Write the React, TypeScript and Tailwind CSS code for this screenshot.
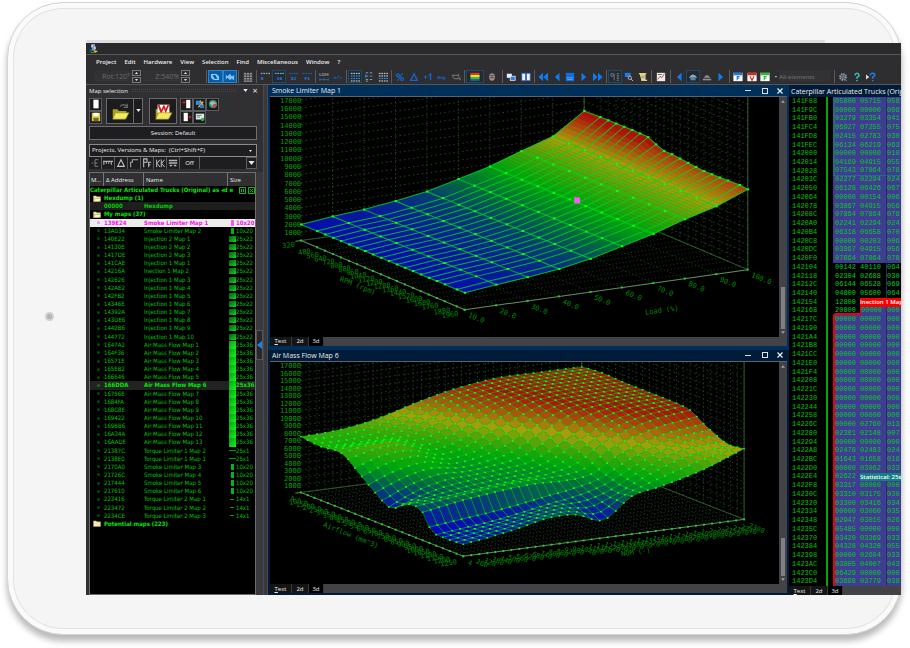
import React from "react";

type Pt = [number, number];

/* ---------- colour ramp for the 3d surfaces ---------- */
const STOPS: [number, number, number, number][] = [
  [14, 8, 8, 184],
  [22, 8, 26, 160],
  [31, 6, 66, 112],
  [38, 4, 106, 66],
  [48, 0, 166, 14],
  [58, 70, 164, 10],
  [68, 166, 160, 12],
  [77, 172, 92, 14],
  [87, 176, 14, 12],
];

function ramp(h: number): string {
  if (h <= STOPS[0][0]) return `rgb(${STOPS[0].slice(1).join(",")})`;
  for (let k = 1; k < STOPS.length; k++) {
    if (h <= STOPS[k][0]) {
      const a = STOPS[k - 1];
      const b = STOPS[k];
      const t = (h - a[0]) / (b[0] - a[0]);
      return `rgb(${[1, 2, 3].map((c) => Math.round(a[c] + (b[c] - a[c]) * t)).join(",")})`;
    }
  }
  return `rgb(${STOPS[STOPS.length - 1].slice(1).join(",")})`;
}

/* smooth interpolation through uneven knots */
function spline(xs: number[], ys: number[], x: number): number {
  const n = xs.length;
  let k = 0;
  while (k < n - 2 && x > xs[k + 1]) k++;
  const slope = (i: number) => (ys[i + 1] - ys[i]) / (xs[i + 1] - xs[i]);
  const tan = (i: number) => {
    if (i === 0) return slope(0);
    if (i === n - 1) return slope(n - 2);
    return (slope(i - 1) + slope(i)) / 2;
  };
  const d = xs[k + 1] - xs[k];
  const t = (x - xs[k]) / d;
  const t2 = t * t;
  const t3 = t2 * t;
  return (
    (2 * t3 - 3 * t2 + 1) * ys[k] +
    (t3 - 2 * t2 + t) * d * tan(k) +
    (3 * t2 - 2 * t3) * ys[k + 1] +
    (t3 - t2) * d * tan(k + 1)
  );
}

function linear(xs: number[], ys: number[], x: number): number {
  let k = 0;
  while (k < xs.length - 2 && x > xs[k + 1]) k++;
  return ys[k] + ((ys[k + 1] - ys[k]) * (x - xs[k])) / (xs[k + 1] - xs[k]);
}

const path = (pts: Pt[]) => pts.map((p) => `${p[0].toFixed(1)},${p[1].toFixed(1)}`).join(" ");

/* ---------- axes shared by both plots ---------- */
interface Box {
  origin: Pt;
  right: Pt;
  down: Pt;
  unit: number;
  us: number[];
  vs: number[];
}

function at(b: Box, u: number, v: number, h: number): Pt {
  return [b.origin[0] + b.right[0] * u + b.down[0] * v, b.origin[1] + b.right[1] * u + b.down[1] * v - h];
}

function Walls({ box }: { box: Box }) {
  const seg = (a: Pt, c: Pt) => `M${a[0].toFixed(1)} ${a[1].toFixed(1)}L${c[0].toFixed(1)} ${c[1].toFixed(1)}`;
  const top = 19 * box.unit + 60;
  let dots = "";
  for (let k = 1; k < 24; k++) {
    dots += seg(at(box, 0, 0, k * box.unit), at(box, 1, 0, k * box.unit));
    dots += seg(at(box, 1, 0, k * box.unit), at(box, 1, 1, k * box.unit));
  }
  let verticals = "";
  let floor = "";
  box.us.forEach((u) => {
    verticals += seg(at(box, u, 0, 0), at(box, u, 0, top));
    floor += seg(at(box, u, 0, 0), at(box, u, 1, 0));
  });
  box.vs.forEach((v) => {
    verticals += seg(at(box, 1, v, 0), at(box, 1, v, top));
    floor += seg(at(box, 0, v, 0), at(box, 1, v, 0));
  });
  return (
    <g fill="none">
      <path d={dots} stroke="#1d4a1d" strokeDasharray="1.5 3" />
      <path d={verticals} stroke="#1b421b" strokeDasharray="1.5 2.5" />
      <path d={floor} stroke="#1f3a1f" strokeDasharray="1 2.5" />
      <path
        d={
          seg(at(box, 1, 0, 60), at(box, 1, 0, top)) +
          seg(at(box, 1, 1, 0), at(box, 1, 1, top)) +
          seg(at(box, 0, 0, 0), at(box, 1, 0, 0)) +
          seg(at(box, 1, 0, 0), at(box, 1, 1, 0))
        }
        stroke="#2d5c2d"
      />
      <path d={seg(at(box, -0.02, 0, 0), at(box, 0, 0, 0)) + seg(at(box, 0, 0, 0), at(box, 0, 1, 0)) + seg(at(box, 0, 1, 0), at(box, 1, 1, 0))} stroke="#5f8f5f" />
      {box.vs.map((v) => {
        const p = at(box, 0, v, 0);
        return <rect key={`v${v}`} x={p[0] - 1} y={p[1] - 1} width="2" height="2" fill="#1fd01f" />;
      })}
      {box.us.map((u) => {
        const p = at(box, u, 1, 0);
        return <rect key={`u${u}`} x={p[0] - 1} y={p[1] - 1} width="2" height="2" fill="#1fd01f" />;
      })}
    </g>
  );
}

function Label({ p, turn, anchor, children }: { p: Pt; turn: number; anchor: "start" | "end" | "middle"; children: React.ReactNode }) {
  return (
    <text
      transform={`translate(${p[0].toFixed(1)} ${p[1].toFixed(1)}) rotate(${turn})`}
      textAnchor={anchor}
      className="fill-[#008c00] font-['DejaVu_Sans_Mono',monospace] text-[7px]"
    >
      {children}
    </text>
  );
}

function HeightScale({ box }: { box: Box }) {
  return (
    <g>
      {Array.from({ length: 17 }, (_, k) => (
        <text
          key={k}
          x={box.origin[0]}
          y={box.origin[1] - (k + 1) * box.unit + 3}
          textAnchor="end"
          className="fill-[#00a400] font-['DejaVu_Sans_Mono',monospace] text-[7px]"
        >
          {(k + 1) * 1000}
        </text>
      ))}
    </g>
  );
}

/* ---------- Smoke Limiter Map 1 ---------- */
const RPM = [320, 480, 560, 640, 720, 800, 880, 960, 1040, 1120, 1200, 1280, 1360, 1440, 1520, 1600, 1680, 1760, 1880, 1960];
const LOAD = [10, 20, 30, 40, 50, 60, 70, 80, 90, 100];
const SMOKE: Box = {
  origin: [31, 143],
  right: [282, -40],
  down: [163, 69],
  unit: 8.25,
  us: LOAD.map((_, i) => i / 9),
  vs: RPM.map((r) => (r - 320) / 1640),
};
const BACK = [16, 19.6, 22, 26, 31, 39, 47, 58, 68, 89];
const FRONT = [17, 20.6, 23.6, 27.3, 33, 41, 49, 59, 67.5, 80];
const EDGE_V = [0, 0.1, 0.19, 0.3, 0.39, 0.44, 0.48, 0.54, 0.64, 0.73, 0.84, 0.95, 1];
const EDGE_H = [89, 89.8, 90, 90.4, 90, 86, 83, 83, 81, 79.7, 80, 81, 80];

function smokeHeight(i: number, v: number): number {
  const row = (k: number) => (k === 9 ? linear(EDGE_V, EDGE_H, v) : BACK[k] + (FRONT[k] - BACK[k]) * v);
  const k = Math.min(8, Math.floor(i));
  return row(k) + (row(k + 1) - row(k)) * (i - k);
}

function SmokePlot() {
  const b = SMOKE;
  const sp = (i: number, v: number) => at(b, i / 9, v, smokeHeight(i, v));
  const cells: React.ReactNode[] = [];
  const STEP = 8;
  for (let j = 0; j < 19; j++) {
    for (let s = 9 * STEP - 1; s >= 0; s--) {
      const i0 = s / STEP;
      const i1 = (s + 1) / STEP;
      const c = ramp(smokeHeight((i0 + i1) / 2, (b.vs[j] + b.vs[j + 1]) / 2));
      cells.push(
        <polygon key={`${j}-${s}`} points={path([sp(i0, b.vs[j]), sp(i1, b.vs[j]), sp(i1, b.vs[j + 1]), sp(i0, b.vs[j + 1])])} fill={c} stroke={c} strokeWidth="0.6" />
      );
    }
  }
  return (
    <svg role="img" aria-label="Smoke Limiter Map 1 surface" viewBox="0 0 507 239" preserveAspectRatio="xMinYMin meet" className="block h-full w-full bg-black">
      <Walls box={b} />
      <HeightScale box={b} />
      {cells}
      <g fill="none" stroke="#00d81a" strokeOpacity="0.8">
        {b.vs.map((v, j) => (
          <polyline key={`v${j}`} points={path(LOAD.map((_, i) => sp(i, v)))} />
        ))}
        {LOAD.map((_, i) => (
          <polyline key={`u${i}`} points={path(b.vs.map((v) => sp(i, v)))} />
        ))}
      </g>
      <g fill="#10ff10">
        {LOAD.map((_, i) =>
          b.vs.map((v, j) => {
            const p = sp(i, v);
            return i === 0 || i === 9 || j === 0 || j === 19 || j % 2 === 1 ? (
              <rect key={`${i}-${j}`} x={p[0] - 1} y={p[1] - 1} width="2.4" height="2" />
            ) : null;
          })
        )}
      </g>
      <rect x="303" y="100" width="6" height="6" fill="#f45cf0" />
      {RPM.map((r, j) => {
        const p = at(b, 0, b.vs[j], 0);
        return (
          <Label key={r} p={[p[0] - 6, p[1] + 6]} turn={-8} anchor="end">
            {r}
          </Label>
        );
      })}
      {LOAD.map((l, i) => {
        const p = at(b, i / 9, 1, 0);
        return (
          <Label key={l} p={[p[0] + 3, p[1] + 7]} turn={22} anchor="start">
            {l.toFixed(1)}
          </Label>
        );
      })}
      <Label p={[69, 183]} turn={22} anchor="start">RPM (rpm)</Label>
      <Label p={[374, 217]} turn={-8} anchor="start">Load (%)</Label>
    </svg>
  );
}

/* ---------- Air Mass Flow Map 6 ---------- */
const GU = [0, 0.1, 0.2, 0.3, 0.4, 0.5, 0.6, 0.7, 0.85, 1];
const GV = [0, 0.12, 0.26, 0.36, 0.46, 0.55, 0.67, 0.75, 0.8, 0.9, 1];
const GH = [
  [56, 57, 60, 66, 74, 81, 86, 89, 89, 89],
  [54, 53, 55, 60, 69, 79, 85, 89, 90, 91],
  [55, 60, 60, 52, 59, 72, 82, 88, 90, 90],
  [42, 52, 54, 47, 51, 63, 76, 86, 89, 90],
  [29, 40, 46, 43, 46, 53, 69, 82, 89, 90],
  [20, 32, 39, 41, 43, 46, 58, 75, 87, 90],
  [31, 33, 36, 39, 41, 43, 50, 68, 82, 88],
  [28, 33, 37, 40, 42, 41, 44, 60, 74, 80],
  [14, 17, 20, 24, 29, 34, 41, 55, 71, 76],
  [11, 15, 19, 24, 28, 27, 36, 50, 65, 69],
  [12, 16, 21, 27, 27, 18, 38, 44, 55, 71],
];
const AIR: Box = {
  origin: [31, 131],
  right: [282, -37],
  down: [163, 64],
  unit: 7.5,
  us: Array.from({ length: 36 }, (_, i) => i / 35),
  vs: Array.from({ length: 25 }, (_, i) => i / 24),
};
const airHeight = (u: number, v: number) => spline(GV, GH.map((row) => spline(GU, row, u)), v);

function AirPlot() {
  const b = AIR;
  const grid = b.vs.map((v) => b.us.map((u) => ({ h: airHeight(u, v), p: at(b, u, v, airHeight(u, v)) })));
  const cells: React.ReactNode[] = [];
  for (let j = 0; j < 24; j++) {
    for (let i = 34; i >= 0; i--) {
      const q = [grid[j][i], grid[j][i + 1], grid[j + 1][i + 1], grid[j + 1][i]];
      const h = q.reduce((s, c) => s + c.h, 0) / 4;
      cells.push(
        <g key={`${j}-${i}`}>
          <polygon points={path(q.map((c) => c.p))} fill={ramp(h)} stroke="#00dc14" strokeWidth="0.6" strokeOpacity="0.7" />
          {q.map((c, k) => (
            <rect key={k} x={c.p[0] - 0.8} y={c.p[1] - 0.7} width="1.6" height="1.4" fill="#10f810" />
          ))}
        </g>
      );
    }
  }
  return (
    <svg role="img" aria-label="Air Mass Flow Map 6 surface" viewBox="0 0 507 223" preserveAspectRatio="xMinYMin meet" className="block h-full w-full bg-black">
      <Walls box={b} />
      <HeightScale box={b} />
      {cells}
      {b.vs.map((v, j) => {
        const p = at(b, 0, v, 0);
        return (
          <Label key={j} p={[p[0] - 6, p[1] + 8]} turn={-8} anchor="end">
            {j === 0 ? 4 : j * 50 + 50}
          </Label>
        );
      })}
      {b.us.map((u, i) => {
        const p = at(b, u, 1, 0);
        return (
          <Label key={i} p={[p[0] + 4, p[1] + 8]} turn={22} anchor="start">
            {i === 0 ? 4 : 200 + i * 60}
          </Label>
        );
      })}
      <Label p={[53, 165]} turn={22} anchor="start">Airflow (mm^3)</Label>
      <Label p={[353, 195]} turn={-8} anchor="start">NOM (-)</Label>
    </svg>
  );
}

/* ---------- icons ---------- */
function Glyph({ name }: { name: string }) {
  const mono = "font-['DejaVu_Sans',sans-serif] text-[5px] font-bold";
  const bars = (c: string, y: number) => [0, 3, 6, 9].map((x) => <rect key={x} x={x + 1} y={y} width="2" height="1.5" fill={c} />);
  const body: Record<string, React.ReactNode> = {
    view3d: <path d="M2 3h5l3 6H5zM2 3v4l3 2M7 3l3 2v4" fill="none" stroke="#8fd0ff" strokeWidth="1.3" />,
    views: <path d="M1 3l2 2 3-3 2 3 3-1v6L8 8 6 10 3 7 1 9z" fill="#7ec0f5" />,
    grid: <g fill="#8a8a8c">{[1, 4.5, 8].map((x) => [1, 4, 7, 10].map((y) => <rect key={`${x}${y}`} x={x} y={y} width="3" height="2.2" />))}</g>,
    b8: <g>{bars("#7da6cf", 1)}<text x="1" y="10" className={mono} fill="#1e7be0">8</text></g>,
    b16: <g>{bars("#7da6cf", 1)}<text x="3" y="10" className={mono} fill="#1e7be0">16</text></g>,
    b32: <g>{bars("#1c5ea8", 1)}<text x="3" y="10" className={mono} fill="#1e7be0">32</text></g>,
    f1: <g>{bars("#1c5ea8", 1)}<text x="3" y="10" className={mono} fill="#1e7be0">F1</text></g>,
    lohi: <g><text x="0" y="5" className={mono} fill="#8a8a8c">LOHI</text><path d="M1 9h10M1 7v4M6 7v4M11 7v4" stroke="#2468a8" /></g>,
    sign: <path d="M1 7h3M2.500 5.500v3M5 8l2-4M8 7h3" stroke="#0f5fc0" strokeWidth="1.200" />,
    rows1: <g>{bars("#b8b8ba", 1)}{bars("#2a86e0", 4)}{bars("#2a86e0", 7)}{bars("#b8b8ba", 10)}</g>,
    rows2: <g><path d="M2 1h3M7 1h3M2 9h3M7 9h3M2 11h3" stroke="#a8a8aa" /><path d="M2 5h3M7 5h3M2 3v4" stroke="#2a86e0" strokeWidth="1.500" /></g>,
    rows3: <g>{bars("#b8b8ba", 1)}{bars("#b8b8ba", 4)}{bars("#2a86e0", 7)}{bars("#b8b8ba", 10)}</g>,
    percent: <g fill="none" stroke="#1463c8" strokeWidth="1.500"><circle cx="3.500" cy="4" r="1.700" /><circle cx="8.500" cy="8.500" r="1.700" /><path d="M9 1.500L3 10.500" /></g>,
    delta: <path d="M6 2L10 10H2z" fill="none" stroke="#1463c8" strokeWidth="1.600" />,
    plus1: <g><path d="M1 6h4M3 4v4" stroke="#1463c8" strokeWidth="1.300" /><path d="M7 4l2-1.500V10" fill="none" stroke="#1463c8" strokeWidth="1.700" /></g>,
    org: <text x="0" y="8" className={mono} fill="#1463c8">Org</text>,
    swap: <path d="M1 4h8V2M3 8h8v2M1 6h3M8 6h3" fill="none" stroke="#6b6b6e" strokeWidth="1.400" />,
    rainbow: <g><rect x="0.500" y="1" width="11" height="2.500" fill="#e03020" /><rect x="0.500" y="3.500" width="11" height="2.500" fill="#f0e020" /><rect x="0.500" y="6" width="11" height="2.500" fill="#38c030" /><rect x="0.500" y="8.500" width="11" height="2" fill="#2060d0" /></g>,
    bug: <g><ellipse cx="6" cy="6" rx="3.500" ry="4.500" fill="#9a9092" /><path d="M3 4h6M3 7h6" stroke="#584447" /><circle cx="6" cy="6" r="1" fill="#a02828" /></g>,
    cascade: <g><rect x="1" y="2" width="6" height="5" fill="#e8f0ff" /><rect x="5" y="5" width="6" height="5" fill="#2f7fe0" stroke="#fff" strokeWidth=".8" /></g>,
    tile: <g fill="#f0f4ff" stroke="#2464c8"><rect x="1" y="1.500" width="4.500" height="9" /><rect x="6.500" y="1.500" width="4.500" height="9" /></g>,
    prev2: <path d="M6 1v10L0.500 6zM12 1v10L6.500 6z" fill="#0c7cf2" />,
    prev: <path d="M9 1v10L3.500 6z" fill="#0c7cf2" />,
    frame: <g><rect x="1" y="1" width="10" height="10" fill="#0f6fe0" /><path d="M2 7h8M3 9h6" stroke="#8cc4ff" strokeWidth=".7" /></g>,
    next: <path d="M3 1v10L8.500 6z" fill="#0c7cf2" />,
    next2: <path d="M0 1v10L5.500 6zM6 1v10L11.500 6z" fill="#0c7cf2" />,
    columns: <path d="M1 2h3v3H1zM5 2v8M8 2h3M8 4h3M8 6h3M8 8h3M8 10h3" fill="none" stroke="#76767a" strokeWidth="1.100" />,
    find: <g><rect x="1" y="1" width="7" height="5" fill="#1d7be8" /><circle cx="7" cy="7" r="2" fill="none" stroke="#c4c4c6" /><path d="M8.500 8.500L11 11" stroke="#c4c4c6" /></g>,
    scroll: <g><path d="M2 2h7v8H4z" fill="#e8e0a8" /><path d="M1 2h9M4 10h7" stroke="#e0d060" strokeWidth="1.500" /><path d="M4 5h4M4 7h4" stroke="#605820" strokeWidth=".7" /></g>,
    chart: <g><rect x="1" y="1" width="10" height="10" fill="#eee" /><path d="M2 9l3-4 2 2 3-5" fill="none" stroke="#d03030" /><path d="M2 3h5" stroke="#555" /></g>,
    home: <g><path d="M1 7Q6-1 11 7z" fill="#9aa8b4" /><rect x="3" y="6" width="6" height="4" fill="#4a88b8" /></g>,
    base: <g><path d="M2 7Q6 0 10 7z" fill="#8c8c90" /><rect x="1" y="8" width="10" height="2" fill="#8c8c90" /></g>,
    fBlue: <g><rect x="0.500" y="1" width="11" height="10" fill="#fff" /><rect x="0.500" y="1" width="11" height="3" fill="#1878e0" /><path d="M5 10V5.500h3M5 7.500h2.500" stroke="#1878e0" fill="none" strokeWidth="1.300" /></g>,
    vRed: <g><rect x="0.500" y="1" width="11" height="10" fill="#fff" /><rect x="0.500" y="1" width="11" height="3" fill="#d82828" /><path d="M3.500 5l2.500 5 2.500-5" stroke="#d82828" fill="none" strokeWidth="1.400" /></g>,
    fGreen: <g><rect x="0.500" y="1" width="11" height="10" fill="#fff" /><rect x="0.500" y="1" width="11" height="3" fill="#30b838" /><path d="M5 10V5.500h3M5 7.500h2.500" stroke="#30b838" fill="none" strokeWidth="1.300" /></g>,
    gear: <g fill="none" stroke="#a4acb4"><circle cx="6" cy="6" r="3.600" strokeWidth="2" strokeDasharray="1.800 1" /><circle cx="6" cy="6" r="1.500" /><path d="M7 8l4 3" stroke="#4a98d8" /></g>,
    help: <path d="M3.500 4Q4 1.500 6 1.500T8.500 4Q8.300 5.300 6 6.500V8M6 9.500V11" fill="none" stroke="#2cc4b4" strokeWidth="1.900" />,
    whats: <g><path d="M0 3l4 3-4 3z" fill="#d8d8da" /><path d="M5 4Q5.500 1.500 8 1.500T10.500 4Q10 5.300 8 6.500V8M8 9.500V11" fill="none" stroke="#1a80e8" strokeWidth="1.900" /></g>,
    page: <path d="M3 1h6v10H3z" fill="#fff" stroke="#c8c8c8" strokeWidth=".5" />,
    save: <g><rect x="1" y="1" width="10" height="10" fill="#d8d048" /><rect x="3" y="1" width="6" height="4" fill="#fff" /><rect x="3" y="7" width="6" height="4" fill="#6b6820" /></g>,
    pageIn: <g><path d="M5 1h5v10H5z" fill="#fff" /><path d="M0 4h3M2 2.500L4 4 2 5.500" stroke="#e02020" fill="#e02020" /></g>,
    pageOut: <g><path d="M2 1h5v10H2z" fill="#fff" /><path d="M8 6h3M9.500 4.500v3" stroke="#e02020" strokeWidth="1.300" /></g>,
    tools: <g><rect x="1" y="2" width="6" height="5" fill="#2c8ce8" /><path d="M4 10l6-7M6 2l4 6" stroke="#e8b830" strokeWidth="1.500" /><rect x="6" y="7" width="5" height="4" fill="#2878c8" /></g>,
    globe: <g><circle cx="6" cy="6" r="4.800" fill="#3a9a68" /><path d="M2 5Q6 0 10 6L7 10z" fill="#a4b8d0" /><circle cx="8" cy="8" r="2.200" fill="#c84848" /></g>,
    card: <g><rect x="1" y="2" width="10" height="7" fill="#e0ece4" /><path d="M2 4h6M2 6h4" stroke="#607080" /><circle cx="9" cy="9" r="2" fill="#30b040" /></g>,
    ladder: <path d="M2 6h2M6 2v8M6 2h4M6 6h3M6 10h4" fill="none" stroke="#8c8c8e" />,
    ruler: <path d="M0 4h12M1 4v4M4 4v3M7 4v3M10 4v4" fill="none" stroke="#b0b0b2" strokeWidth="1.300" />,
    triangle: <path d="M6 2L10 10H2z" fill="none" stroke="#c8c8ca" strokeWidth="1.300" />,
    corner: <path d="M2 11V5h2V2h7" fill="none" stroke="#a8a8aa" strokeWidth="1.300" />,
    flag: <path d="M2 11V1h4v4H2M8 11V5h3M8 8h2" fill="none" stroke="#c0c0c2" strokeWidth="1.300" />,
    keys: <path d="M2 2v9M6 2L2.500 6.500 6 11M7.500 2v9M11.500 2L8 6.500l3.500 4.500" fill="none" stroke="#c0c0c2" strokeWidth="1.200" />,
    stack: <path d="M1 3h10M1 6h10M2 9h3M7 9h3" fill="none" stroke="#b4b4b6" strokeWidth="1.600" />,
  };
  return (
    <svg viewBox="0 0 12 12" className="block size-[10px] shrink-0" aria-hidden="true">
      {body[name]}
    </svg>
  );
}

function Arrow({ up, className }: { up?: boolean; className: string }) {
  return (
    <svg viewBox="0 0 6 4" className={`block ${className}`} aria-hidden="true">
      <path d={up ? "M0 4h6L3 0z" : "M0 0h6L3 4z"} fill="currentColor" />
    </svg>
  );
}

function Folder({ open }: { open?: boolean }) {
  return (
    <svg viewBox="0 0 9 8" className="block h-[7px] w-2" aria-hidden="true">
      <path d="M0.500 1h3l1 1h4v5.500h-8z" fill="#f4ecaa" stroke="#b8a860" strokeWidth=".5" />
      {open && <path d="M2 4h7L7.500 7.500h-7z" fill="#fff8c8" stroke="#8c7c38" strokeWidth=".5" />}
    </svg>
  );
}

function BigFolder({ version }: { version?: boolean }) {
  return (
    <svg viewBox="0 0 24 22" className="block h-[20px] w-[22px]" aria-hidden="true">
      <path d="M4 9h5l2 2h8v8H4z" fill="#a8a020" />
      {version ? (
        <g>
          <path d="M6 4h13v9H6z" fill="#fff" />
          <path d="M7 4l3 8 3-6 2 5 3-7" fill="none" stroke="#d82020" strokeWidth="2" />
        </g>
      ) : (
        <path d="M12 6q4-4 8 0M20 3v4h-4" fill="none" stroke="#6a6a6c" strokeWidth="1.300" />
      )}
      <path d="M7 13h15l-4 7H4z" fill="#f0ea60" stroke="#8c8418" strokeWidth=".6" />
    </svg>
  );
}

/* ---------- main toolbar ---------- */
const GROUPS: { width: string; items: string[] }[] = [
  { width: "w-8", items: ["view3d!", "views!"] },
  { width: "w-[18px]", items: ["grid"] },
  { width: "w-[59px]", items: ["b8", "b16*", "b32", "f1"] },
  { width: "w-[31px]", items: ["lohi", "sign"] },
  { width: "w-[45px]", items: ["rows1*", "rows2", "rows3"] },
  { width: "w-[73px]", items: ["percent", "delta", "plus1", "org", "swap"] },
  { width: "w-[38px]", items: ["rainbow*", "bug"] },
  { width: "w-8", items: ["cascade", "tile"] },
  { width: "w-[72px]", items: ["prev2", "prev", "frame", "next", "next2"] },
  { width: "w-[45px]", items: ["columns*", "find", "scroll"] },
  { width: "w-[19px]", items: ["chart"] },
  { width: "w-[59px]", items: ["prev", "home*", "base", "next"] },
  { width: "w-[44px]", items: ["fBlue", "vRed", "fGreen"] },
];

function ToolButton({ item }: { item: string }) {
  const name = item.replace(/[!*]/, "");
  const look = item.endsWith("!") ? "border-[#2a86c8] bg-[#0a5ca8]" : item.endsWith("*") ? "border-[#1c4a68] bg-[#252a30]" : "border-transparent";
  return (
    <button type="button" aria-label={name} className={`flex h-[13px] min-w-0 flex-1 items-center justify-center border ${look}`}>
      <Glyph name={name} />
    </button>
  );
}

function Spin({ label, value }: { label: string; value: string }) {
  return (
    <div className="flex shrink-0 items-center">
      <input aria-label={label} readOnly value={value} className="h-[11px] w-[38px] bg-[#323234] pr-0.5 text-right text-[7px] text-[#6c6c6e] outline-none" />
      <div className="flex flex-col gap-px">
        <button type="button" aria-label={`${label} up`} className="flex h-[6px] w-[9px] items-center justify-center border border-[#77777a]">
          <Arrow up className="h-0.5 w-[3px]" />
        </button>
        <button type="button" aria-label={`${label} down`} className="flex h-[6px] w-[9px] items-center justify-center border border-[#77777a]">
          <Arrow className="h-0.5 w-[3px]" />
        </button>
      </div>
    </div>
  );
}

function MainToolbar() {
  return (
    <div className="flex h-4 shrink-0 items-center overflow-hidden border-b border-[#56565a] pl-2">
      <Spin label="Rotation" value="Rot:120°" />
      <div className="w-0.5 shrink-0" />
      <Spin label="Zoom" value="Z:540%" />
      <div className="w-[16px] shrink-0" />
      {GROUPS.map((g, k) => (
        <div key={k} className={`${g.width} flex shrink-0 items-center border-l border-[#5a5a5c] px-px`}>
          {g.items.map((i, n) => (
            <ToolButton key={n} item={i} />
          ))}
        </div>
      ))}
      <span className="w-[6px] text-center text-[6px] leading-none">•</span>
      <input aria-label="Element filter" readOnly value="All elements" className="h-[11px] w-[52px] shrink-0 bg-[#323234] text-[6px] font-semibold text-[#68686a] outline-none" />
      <div className="ml-[3px] flex w-[44px] shrink-0 border-l border-[#5a5a5c] pl-px">
        {["gear", "help", "whats"].map((i) => (
          <ToolButton key={i} item={i} />
        ))}
      </div>
    </div>
  );
}

/* ---------- map list ---------- */
type MapRow = [string, string, string];
const MAPS: MapRow[] = [
  ["139E24", "Smoke Limiter Map 1", "10x20"],
  ["13A034", "Smoke Limiter Map 2", "10x20"],
  ["140E22", "Injection 2 Map 1", "25x22"],
  ["14130E", "Injection 2 Map 2", "25x22"],
  ["1417DE", "Injection 2 Map 3", "25x22"],
  ["141CAE", "Injection 1 Map 1", "25x22"],
  ["14216A", "Inection 1 Map 2", "25x22"],
  ["142626", "Injection 1 Map 3", "25x22"],
  ["142AE2", "Injection 1 Map 4", "25x22"],
  ["142FB2", "Injection 1 Map 5", "25x22"],
  ["14346E", "Injection 1 Map 6", "25x22"],
  ["14392A", "Injection 1 Map 7", "25x22"],
  ["143DE6", "Injection 1 Map 8", "25x22"],
  ["1442B6", "Injection 1 Map 9", "25x22"],
  ["144772", "Injection 1 Map 10", "25x22"],
  ["1647A2", "Air Mass Flow Map 1", "25x36"],
  ["164F36", "Air Mass Flow Map 2", "25x36"],
  ["16571E", "Air Mass Flow Map 3", "25x36"],
  ["165EB2", "Air Mass Flow Map 4", "25x36"],
  ["166646", "Air Mass Flow Map 5", "25x36"],
  ["166DDA", "Air Mass Flow Map 6", "25x36"],
  ["16756E", "Air Mass Flow Map 7", "25x36"],
  ["1684FA", "Air Mass Flow Map 8", "25x36"],
  ["168C8E", "Air Mass Flow Map 9", "25x36"],
  ["169422", "Air Mass Flow Map 10", "25x36"],
  ["169BB6", "Air Mass Flow Map 11", "25x36"],
  ["16A34A", "Air Mass Flow Map 12", "25x36"],
  ["16AADE", "Air Mass Flow Map 13", "25x36"],
  ["21387C", "Torque Limiter 1 Map 2", "25x1"],
  ["2138E0", "Torque Limiter 1 Map 1", "25x1"],
  ["2170A0", "Smoke Limiter Map 3", "10x20"],
  ["21726C", "Smoke Limiter Map 4", "10x20"],
  ["217444", "Smoke Limiter Map 5", "10x20"],
  ["217610", "Smoke Limiter Map 6", "10x20"],
  ["223416", "Torque Limiter 2 Map 1", "14x1"],
  ["223472", "Torque Limiter 2 Map 2", "14x1"],
  ["2234CE", "Torque Limiter 2 Map 3", "14x1"],
];

const SHAPES: Record<string, string> = {
  "10x20": "h-[6px] w-[3px] bg-[#00b414]",
  "25x22": "h-[6px] w-[7px] bg-linear-to-br from-[#045c08] to-[#10d820]",
  "25x36": "h-full w-[7px] bg-linear-to-br from-[#08a010] to-[#14f81c]",
  "25x1": "h-px w-[7px] bg-[#00a010]",
  "14x1": "h-px w-1 bg-[#00a010]",
};

function ListRow({ row }: { row: MapRow }) {
  const [address, name, size] = row;
  const selected = address === "139E24";
  const active = address === "166DDA";
  const tone = selected ? "bg-[#ececec] font-bold text-[#f414e8]" : active ? "bg-[#222] font-bold text-[#00e800]" : "text-[#00c400]";
  return (
    <tr className={`flex min-h-0 flex-1 items-center ${tone}`}>
      <td className="flex w-[14px] shrink-0 justify-end pr-1">
        <span className="size-[3px] rounded-full bg-current opacity-40" />
      </td>
      <td className="w-10 shrink-0">{address}</td>
      <td className="w-[84px] shrink-0">{name}</td>
      <td className="flex h-full shrink-0 items-center">
        <span className="flex h-full w-[8px] items-center justify-center">
          <span className={selected ? "h-[6px] w-[3px] bg-[#f45cf0]" : SHAPES[size]} />
        </span>
        {size}
      </td>
    </tr>
  );
}

function GroupRow({ open, children }: { open?: boolean; children: React.ReactNode }) {
  return (
    <tr className="flex min-h-0 flex-1 items-center font-bold text-[#00e800]">
      <td className="w-[14px] shrink-0 pl-[3px]"><Folder open={open} /></td>
      <td>{children}</td>
    </tr>
  );
}

function SmallButton({ name }: { name: string }) {
  return (
    <button type="button" aria-label={name} className="flex size-[13px] items-center justify-center border border-[#5a5a5c] bg-[#1c1c1e]">
      <Glyph name={name} />
    </button>
  );
}

function MapPanel() {
  return (
    <aside className="flex w-[177px] shrink-0 flex-col bg-[#303033] pl-[3px] text-[6px]">
      <header className="flex h-[11px] shrink-0 items-center pr-1">
        <h2>Map selection</h2>
        <div className="mx-1 h-[3px] flex-1 border-y border-dotted border-[#454548]" />
        <button type="button" aria-label="Panel menu" className="flex w-[11px] justify-center"><Arrow className="h-[3px] w-[5px]" /></button>
        <button type="button" aria-label="Close panel" className="w-2 text-[9px] leading-none">×</button>
      </header>
      <div className="flex h-[30px] shrink-0 items-center pb-px">
        <div className="flex flex-col">
          <SmallButton name="page" />
          <SmallButton name="save" />
        </div>
        <button type="button" aria-label="Open project" className="ml-1 flex h-[26px] w-7 items-center justify-center border border-[#6a6a6c] bg-[#1c1c1e]"><BigFolder /></button>
        <button type="button" aria-label="Recent projects" className="flex h-[26px] w-[9px] items-center justify-center border border-l-0 border-[#6a6a6c] bg-[#1c1c1e]"><Arrow className="h-[3px] w-[5px]" /></button>
        <button type="button" aria-label="Open version" className="ml-[6px] flex h-[26px] w-7 items-center justify-center border border-[#6a6a6c] bg-[#1c1c1e]"><BigFolder version /></button>
        <div className="ml-[3px] grid grid-cols-3">
          {["pageIn", "tools", "globe", "pageOut", "card"].map((n) => (
            <SmallButton key={n} name={n} />
          ))}
        </div>
      </div>
      <button type="button" className="h-[14px] w-[168px] shrink-0 border border-[#6e6e70] bg-[#1e1e20] text-center">Session: Default</button>
      <div className="mt-1 flex h-[13px] w-[168px] shrink-0 items-center border border-[#8a8a8c] bg-[#1e1e20] pr-1">
        <select aria-label="Search projects, versions and maps" className="h-[11px] min-w-0 flex-1 appearance-none bg-transparent px-0.5 text-[6px] leading-[11px] outline-none">
          <option>Projects, Versions &amp; Maps:&nbsp; (Ctrl+Shift+F)</option>
        </select>
        <Arrow className="h-0.5 w-[3px]" />
      </div>
      <div className="flex h-[12px] w-[168px] shrink-0 items-center bg-[#1e1e20]">
        {["ladder", "ruler", "triangle", "corner", "flag", "keys", "stack"].map((t) => (
          <button key={t} type="button" aria-label={t} className="flex h-full w-[13px] items-center justify-center border-r border-[#5c5c5e]">
            <Glyph name={t} />
          </button>
        ))}
        <button type="button" className="h-full w-[20px] border-r border-[#5c5c5e] text-center">Off</button>
        <button type="button" aria-label="More filters" className="ml-auto flex h-full w-[11px] items-center justify-center border border-[#5c5c5e]"><Arrow className="h-1 w-[7px]" /></button>
      </div>
      <div className="mt-[3px] flex min-h-0 flex-1">
        <div className="w-[168px] border border-[#6e6e70] bg-black">
          <table className="flex h-[355px] flex-col whitespace-nowrap leading-none">
            <thead className="block shrink-0">
              <tr className="flex h-[13px] items-center bg-[#303033] text-left">
                <th className="flex h-full w-[14px] items-center border-r border-[#77777a] pl-px font-normal">M...</th>
                <th className="flex h-full w-[40px] items-center border-r border-[#77777a] pl-0.5 font-normal">Δ Address</th>
                <th className="flex h-full w-[84px] items-center border-r border-[#77777a] pl-0.5 font-normal">Name</th>
                <th className="flex h-full items-center pl-0.5 font-normal">Size</th>
              </tr>
            </thead>
            <tbody className="flex min-h-0 flex-1 flex-col font-['DejaVu_Sans_Condensed','DejaVu_Sans',sans-serif]">
              <tr className="flex min-h-0 flex-1 items-center font-bold text-[#00e800]">
                <td className="w-[149px] shrink-0">Caterpillar Articulated Trucks (Original) as ◂d e</td>
                <td className="flex gap-0.5">
                  <svg viewBox="0 0 7 7" className="size-[7px]" aria-hidden="true"><path d="M.5.5h6v6h-6zM2.500 2v3M4.500 2v3" fill="none" stroke="#00c800" /></svg>
                  <svg viewBox="0 0 7 7" className="size-[7px]" aria-hidden="true"><path d="M.5.5h6v6h-6zM2 2l3 3M5 2l-3 3" fill="none" stroke="#00c800" /></svg>
                </td>
              </tr>
              <GroupRow open>Hexdump (1)</GroupRow>
              <tr className="flex min-h-0 flex-1 items-center bg-[#1e1e1e] font-bold text-[#00cc00]">
                <td className="w-[14px] shrink-0" />
                <td className="w-10 shrink-0">00000</td>
                <td>Hexdump</td>
              </tr>
              <GroupRow open>My maps (37)</GroupRow>
              {MAPS.map((m) => (
                <ListRow key={m[0]} row={m} />
              ))}
              <GroupRow>Potential maps (223)</GroupRow>
            </tbody>
          </table>
        </div>
        <div className="flex-1 bg-[#3a393e] pt-[158px]">
          <button type="button" aria-label="Collapse panel" className="flex h-[30px] w-full items-center justify-center border border-[#55555a] bg-[#29292c]">
            <svg viewBox="0 0 5 8" className="h-2 w-[5px]" aria-hidden="true"><path d="M5 0v8L0 4z" fill="#1585f0" /></svg>
          </button>
        </div>
      </div>
    </aside>
  );
}

/* ---------- document windows ---------- */
function ViewTabs() {
  const base = "h-full shrink-0 border-r border-[#3a3a3c]";
  return (
    <div className="flex h-[9px] shrink-0 items-center bg-[#434347] text-[6px] leading-none">
      <button type="button" className={`${base} w-[22px] bg-[#151517]`}><u>T</u>ext</button>
      <button type="button" className={`${base} w-[17px] bg-[#151517]`}>2d</button>
      <button type="button" className={`${base} w-[15px] bg-black`}>3d</button>
    </div>
  );
}

function PlotWindow({ title, frame, bar, grow, thumb, children }: { title: string; frame: string; bar: string; grow: string; thumb: string; children: React.ReactNode }) {
  return (
    <section className={`flex min-h-0 flex-col border-x-2 ${frame} ${grow}`}>
      <header className={`flex h-[12px] shrink-0 items-center border-b border-[#5a6470] pl-0.5 ${bar}`}>
        <h2 className="flex-1 text-[7px] leading-none">{title}</h2>
        <button type="button" aria-label="Minimize" className="flex w-[17px] justify-center"><span className="h-px w-[6px] bg-[#d8d8d8]" /></button>
        <button type="button" aria-label="Maximize" className="flex w-[17px] justify-center"><span className="size-[6px] border border-[#e0e0e0]" /></button>
        <button type="button" aria-label="Close" className="flex w-[14px] justify-center">
          <svg viewBox="0 0 6 6" className="size-[6px]" aria-hidden="true"><path d="M0.500 0.500l5 5M5.500 0.500l-5 5" stroke="#f0f0f0" strokeWidth="1.200" /></svg>
        </button>
      </header>
      <div className="flex min-h-0 flex-1">
        <div className="min-w-0 flex-1 bg-black">{children}</div>
        <div className="flex w-2 shrink-0 flex-col items-center bg-[#434347] py-[3px] text-[#a0a0a2]">
          <Arrow up className="h-[3px] w-1" />
          <div className="flex-1" />
          <div className={`mb-0.5 w-1 bg-[#808084] ${thumb}`} />
          <Arrow className="h-[3px] w-1" />
        </div>
      </div>
      <ViewTabs />
    </section>
  );
}

const ZERO = ["00000", "00000", "000"];
const HEX: string[][] = [
  ["05800", "05715", "058"], ["00000", "00000", "008"], ["03279", "03354", "041"], ["06927", "07255", "075"],
  ["02415", "02783", "030"], ["06134", "06219", "063"], ["00000", "00000", "010"], ["04169", "04915", "055"],
  ["07543", "07864", "078"], ["02277", "02294", "024"], ["06128", "06426", "067"], ["00000", "00154", "006"],
  ["03867", "04915", "056"], ["07864", "07864", "078"], ["02241", "02294", "024"], ["06318", "06658", "070"],
  ["00000", "00203", "006"], ["03867", "04915", "056"], ["07864", "07864", "078"], ["00142", "40110", "064"],
  ["02304", "02688", "030"], ["06144", "06528", "069"], ["04800", "05600", "064"], ["12800", "Inection 1 Map 2"],
  ["20800", "00000", "000"], ...Array.from({ length: 12 }, () => ZERO), ["00000", "02760", "013"],
  ["02381", "02148", "007"], ZERO, ["02478", "02483", "024"], ["01643", "01658", "016"],
  ["00000", "03062", "033"], ["02622", "Statistical: 25x22"], ["03317", "00000", "000"], ["03310", "03175", "030"],
  ["03300", "03416", "034"], ["00000", "03060", "035"], ["02947", "03015", "026"], ["05485", "00000", "000"],
  ["03420", "03369", "033"], ["04328", "04328", "055"], ["00000", "02604", "033"], ["03805", "04007", "043"],
  ["06429", "00000", "000"], ["03698", "03779", "038"],
];

function HexRow({ cells, index }: { cells: string[]; index: number }) {
  const address = (0x141f88 + index * 20).toString(16).toUpperCase();
  const plain = index >= 19 && index <= 23;
  const fill = plain ? "" : "bg-[#403c92]";
  const red = index > 24;
  const rule = index === 8 ? "border-b border-b-[#1c6c90]" : "";
  const edge = red ? "border-l-[#f00000]" : plain || index === 24 ? "border-l-black" : index < 9 ? "border-l-[#1c6c90]" : "border-l-[#403c92]";
  return (
    <tr className="flex min-h-0 flex-1 items-center overflow-hidden">
      <td className="w-[34px] shrink-0 text-[#00c000]">{address}</td>
      <td className="h-full w-[7px] shrink-0 border-l-2 border-[#00a800]" />
      <td className={`flex h-full w-[27px] shrink-0 items-center border-l-2 ${edge} ${index === 24 ? "border-b-2 border-b-[#f00000] bg-black" : fill} ${rule} text-[#00c824]`}>
        {cells[0]}
      </td>
      {cells.length === 2 ? (
        <td className={`flex h-full flex-1 items-center font-['Open_Sans',sans-serif] text-[6px] font-semibold text-white ${index === 23 ? "bg-[#f40000]" : "bg-[#108080]"}`}>{cells[1]}</td>
      ) : (
        <>
          <td className={`flex h-full w-[26px] shrink-0 items-center ${fill} ${rule} ${index === 24 ? "border-l border-l-[#f00000]" : ""} text-[#00c824]`}>{cells[1]}</td>
          <td className={`flex h-full min-w-0 flex-1 items-center border-l border-l-[#2c2c6c] ${fill} ${rule} text-[#00c824]`}>{cells[2]}</td>
        </>
      )}
    </tr>
  );
}

function HexWindow() {
  return (
    <section className="flex w-[112px] shrink-0 flex-col overflow-hidden bg-black">
      <header className="flex h-[12px] shrink-0 items-center whitespace-nowrap bg-[#001c38] pl-0.5">
        <h2 className="text-[7px] leading-none">Caterpillar Articulated Trucks (Original)</h2>
      </header>
      <table className="flex min-h-0 flex-1 flex-col whitespace-nowrap pl-[3px] font-['Liberation_Mono',monospace] text-[7px] leading-none">
        <tbody className="flex min-h-0 flex-1 flex-col">
          {HEX.map((cells, k) => (
            <HexRow key={k} cells={cells} index={k} />
          ))}
        </tbody>
      </table>
      <ViewTabs />
    </section>
  );
}

export default function App() {
  return (
    <div className="flex h-screen min-h-[600px] bg-white pt-0.5 pr-2 pb-[13px] pl-[7px] font-['Open_Sans','Noto_Sans',sans-serif]">
      <div className="flex min-w-0 flex-1 rounded-[56px] border border-[#d4d4d4] bg-[#f5f5f5] pt-[37px] pb-[39px] shadow-[0_6px_6px_rgba(0,0,0,0.28),inset_0_0_0_5px_#fafafa,inset_0_0_0_6px_#e2e2e2]">
        <div className="flex w-[78px] shrink-0 items-center justify-center pl-1">
          <button type="button" aria-label="Home" className="mb-0.5 size-[9px] rounded-full border-2 border-[#d0d0d0] bg-[#b4b4b4]" />
        </div>
        <div className="flex min-w-0 flex-1 flex-col text-[6px] leading-none text-[#ececec]">
          <div className="mr-[76px] h-[3px] shrink-0 bg-[#dedede]" />
          <div className="flex h-[11px] shrink-0 items-center bg-[#2a2a2c] pl-[3px]">
            <svg viewBox="0 0 9 9" className="size-[9px]" aria-hidden="true">
              <rect x="1" width="7" height="6" fill="#10305c" />
              <path d="M6 1H3v2h3v2H3" fill="none" stroke="#fff" strokeWidth="1.200" />
              <path d="M0 7l3 2h3z" fill="#38c040" /><path d="M4 6l5 1-3 2z" fill="#e8c020" /><path d="M0 5l3 2 2-1z" fill="#2080e8" />
            </svg>
          </div>
          <nav className="flex h-[15px] shrink-0 items-center gap-2 border-t border-[#56565a] bg-[#2e2e31] pl-[10px] font-semibold">
            {["Project", "Edit", "Hardware", "View", "Selection", "Find", "Miscellaneous", "Window", "?"].map((m) => (
              <button key={m} type="button">{m}</button>
            ))}
          </nav>
          <div className="flex min-h-0 flex-1 flex-col bg-[#2e2e31]">
            <MainToolbar />
            <div className="flex min-h-0 flex-1">
              <MapPanel />
              <div className="w-[5px] shrink-0 border-x border-[#4a4a4e] bg-[#39393d]" />
              <main className="flex min-w-0 flex-1 flex-col">
                <PlotWindow title="Smoke Limiter Map 1" frame="border-[#00305a] border-b-4" bar="bg-[#00305a]" grow="flex-[264]" thumb="h-[42px]">
                  <SmokePlot />
                </PlotWindow>
                <PlotWindow title="Air Mass Flow Map 6" frame="border-[#001c38] border-b-2" bar="bg-[#001c38]" grow="flex-[246]" thumb="h-[38px]">
                  <AirPlot />
                </PlotWindow>
              </main>
              <HexWindow />
            </div>
          </div>
        </div>
      </div>
    </div>
  );
}
